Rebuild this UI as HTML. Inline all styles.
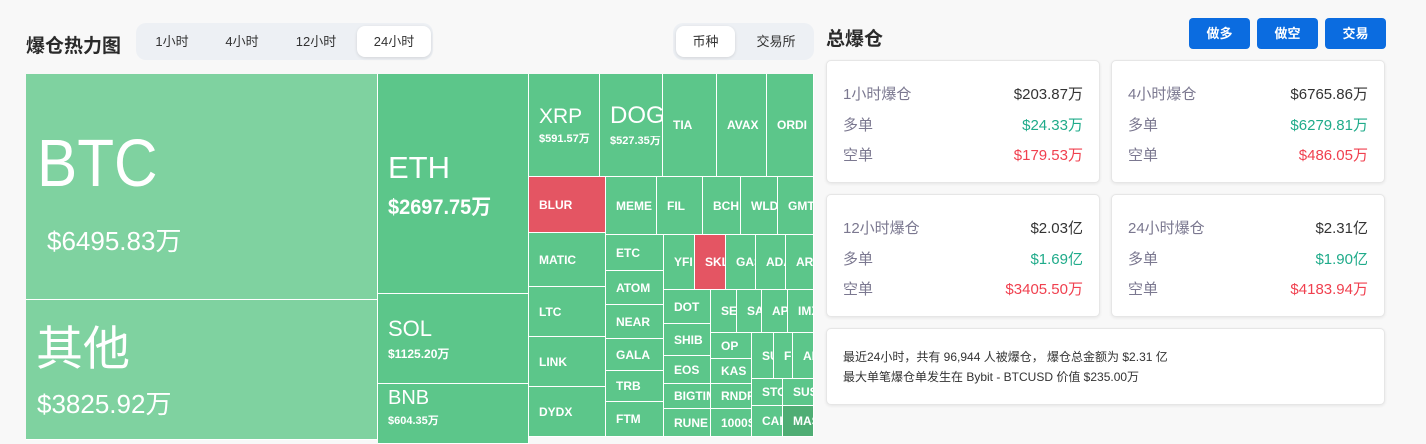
<!DOCTYPE html>
<html><head><meta charset="utf-8"><style>
*{margin:0;padding:0;box-sizing:border-box}
body{width:1426px;height:435px;background:#f8f8f8;font-family:"Liberation Sans","Noto Sans CJK SC",sans-serif;position:relative;overflow:hidden;color:#222}
.a{position:absolute}
.t{position:absolute;background:#5cc68a;border-right:1px solid #fff;border-bottom:1px solid #fff;overflow:hidden;color:#fff;font-weight:bold;font-size:12px;display:flex;align-items:center;padding-left:10px;white-space:nowrap}
.r{background:#e45563}
.l{position:absolute;white-space:nowrap;line-height:1;color:#fff}
.tabs{position:absolute;background:#edf0f4;border-radius:10px}
.tab{position:absolute;font-size:13px;color:#333;line-height:31px;text-align:center}
.on{background:#fff;border-radius:8px;box-shadow:0 1px 3px rgba(0,0,0,.12)}
.btn{position:absolute;top:18px;width:61px;height:31px;background:#0b6ce0;border-radius:4px;color:#fff;font-weight:bold;font-size:13px;text-align:center;line-height:31px}
.card{position:absolute;background:#fff;border:1px solid #e6e6e6;border-radius:5px;box-shadow:0 1px 3px rgba(0,0,0,.08)}
.row{position:absolute;left:16px;right:16px;font-size:15px;display:flex;justify-content:space-between;color:#7b7890}
.g{color:#1fab8a}.rd{color:#f0404f}.k{color:#333}
</style></head><body>
<div class="a" style="left:26px;top:31px;font-size:19px;font-weight:bold;color:#2a2a2a">爆仓热力图</div>
<div class="tabs" style="left:136px;top:23px;width:297px;height:37px">
<div class="tab" style="left:6px;top:3px;width:60px">1小时</div>
<div class="tab" style="left:76px;top:3px;width:60px">4小时</div>
<div class="tab" style="left:148px;top:3px;width:64px">12小时</div>
<div class="tab on" style="left:221px;top:3px;width:74px">24小时</div>
</div>
<div class="tabs" style="left:673px;top:23px;width:141px;height:37px">
<div class="tab on" style="left:3px;top:3px;width:59px">币种</div>
<div class="tab" style="left:70px;top:3px;width:66px">交易所</div>
</div>

<div class="t" style="left:26px;top:74px;width:352px;height:226px;background:#7fd2a0"></div>
<div class="l" style="left:37px;top:130px;font-size:67px;transform:scaleX(.9);transform-origin:left">BTC</div>
<div class="l" style="left:47px;top:228px;font-size:26px">$6495.83万</div>
<div class="t" style="left:26px;top:300px;width:352px;height:140px;background:#7fd2a0"></div>
<div class="l" style="left:36px;top:325px;font-size:47px">其他</div>
<div class="l" style="left:37px;top:391px;font-size:26px">$3825.92万</div>

<div class="t" style="left:378px;top:74px;width:151px;height:220px"></div>
<div class="l" style="left:388px;top:152px;font-size:31px">ETH</div>
<div class="l" style="left:388px;top:197px;font-size:21px;font-weight:bold;transform:scaleX(.95);transform-origin:left">$2697.75万</div>
<div class="t" style="left:378px;top:294px;width:151px;height:90px"></div>
<div class="l" style="left:388px;top:318px;font-size:22px">SOL</div>
<div class="l" style="left:388px;top:348px;font-size:12px;font-weight:bold">$1125.20万</div>
<div class="t" style="left:378px;top:384px;width:151px;height:60px"></div>
<div class="l" style="left:388px;top:388px;font-size:20px">BNB</div>
<div class="l" style="left:388px;top:416px;font-size:11px;font-weight:bold">$604.35万</div>

<div class="t" style="left:529px;top:74px;width:71px;height:103px"></div>
<div class="l" style="left:539px;top:106px;font-size:21px">XRP</div>
<div class="l" style="left:539px;top:134px;font-size:11px;font-weight:bold">$591.57万</div>
<div class="t" style="left:600px;top:74px;width:63px;height:103px"></div>
<div class="l" style="left:610px;top:104px;font-size:24px;width:52px;overflow:hidden">DOGE</div>
<div class="l" style="left:610px;top:136px;font-size:11px;font-weight:bold;width:52px;overflow:hidden">$527.35万</div>
<div class="t" style="left:663px;top:74px;width:54px;height:103px">TIA</div>
<div class="t" style="left:717px;top:74px;width:50px;height:103px">AVAX</div>
<div class="t" style="left:767px;top:74px;width:47px;height:103px">ORDI</div>

<div class="t r" style="left:529px;top:177px;width:77px;height:56px">BLUR</div>
<div class="t" style="left:529px;top:233px;width:77px;height:54px">MATIC</div>
<div class="t" style="left:529px;top:287px;width:77px;height:50px">LTC</div>
<div class="t" style="left:529px;top:337px;width:77px;height:50px">LINK</div>
<div class="t" style="left:529px;top:387px;width:77px;height:50px">DYDX</div>

<div class="t" style="left:606px;top:177px;width:51px;height:58px">MEME</div>
<div class="t" style="left:657px;top:177px;width:46px;height:58px">FIL</div>
<div class="t" style="left:703px;top:177px;width:38px;height:58px">BCH</div>
<div class="t" style="left:741px;top:177px;width:37px;height:58px">WLD</div>
<div class="t" style="left:778px;top:177px;width:36px;height:58px">GMT</div>

<div class="t" style="left:606px;top:235px;width:58px;height:36px">ETC</div>
<div class="t" style="left:606px;top:271px;width:58px;height:34px">ATOM</div>
<div class="t" style="left:606px;top:305px;width:58px;height:34px">NEAR</div>
<div class="t" style="left:606px;top:339px;width:58px;height:32px">GALA</div>
<div class="t" style="left:606px;top:371px;width:58px;height:31px">TRB</div>
<div class="t" style="left:606px;top:402px;width:58px;height:35px">FTM</div>

<div class="t" style="left:664px;top:235px;width:31px;height:55px">YFI</div>
<div class="t r" style="left:695px;top:235px;width:31px;height:55px">SKL</div>
<div class="t" style="left:726px;top:235px;width:30px;height:55px">GAS</div>
<div class="t" style="left:756px;top:235px;width:30px;height:55px">ADA</div>
<div class="t" style="left:786px;top:235px;width:28px;height:55px">ARB</div>

<div class="t" style="left:664px;top:290px;width:47px;height:34px">DOT</div>
<div class="t" style="left:664px;top:324px;width:47px;height:32px">SHIB</div>
<div class="t" style="left:664px;top:356px;width:47px;height:28px">EOS</div>
<div class="t" style="left:664px;top:384px;width:47px;height:25px">BIGTIME</div>
<div class="t" style="left:664px;top:409px;width:47px;height:28px">RUNE</div>

<div class="t" style="left:711px;top:290px;width:26px;height:43px">SEI</div>
<div class="t" style="left:737px;top:290px;width:25px;height:43px">SAND</div>
<div class="t" style="left:762px;top:290px;width:26px;height:43px">APT</div>
<div class="t" style="left:788px;top:290px;width:26px;height:43px">IMX</div>

<div class="t" style="left:711px;top:333px;width:41px;height:26px">OP</div>
<div class="t" style="left:711px;top:359px;width:41px;height:25px">KAS</div>
<div class="t" style="left:711px;top:384px;width:41px;height:25px">RNDR</div>
<div class="t" style="left:711px;top:409px;width:41px;height:28px">1000SATS</div>

<div class="t" style="left:752px;top:333px;width:22px;height:46px">SUI</div>
<div class="t" style="left:774px;top:333px;width:19px;height:46px">FLOW</div>
<div class="t" style="left:793px;top:333px;width:21px;height:46px">AR</div>
<div class="t" style="left:752px;top:379px;width:31px;height:27px">STORJ</div>
<div class="t" style="left:783px;top:379px;width:31px;height:27px">SUSHI</div>
<div class="t" style="left:752px;top:406px;width:31px;height:31px">CAKE</div>
<div class="t" style="left:783px;top:406px;width:31px;height:31px;background:#4fad74">MASK</div>

<div class="a" style="left:826px;top:24px;font-size:19px;font-weight:bold;color:#2a2a2a">总爆仓</div>
<div class="btn" style="left:1189px">做多</div>
<div class="btn" style="left:1257px">做空</div>
<div class="btn" style="left:1325px">交易</div>

<div class="card" style="left:826px;top:60px;width:274px;height:123px">
<div class="row" style="top:22px"><span>1小时爆仓</span><span class="k">$203.87万</span></div>
<div class="row" style="top:53px"><span>多单</span><span class="g">$24.33万</span></div>
<div class="row" style="top:83px"><span>空单</span><span class="rd">$179.53万</span></div>
</div>
<div class="card" style="left:1111px;top:60px;width:274px;height:123px">
<div class="row" style="top:22px"><span>4小时爆仓</span><span class="k">$6765.86万</span></div>
<div class="row" style="top:53px"><span>多单</span><span class="g">$6279.81万</span></div>
<div class="row" style="top:83px"><span>空单</span><span class="rd">$486.05万</span></div>
</div>
<div class="card" style="left:826px;top:194px;width:274px;height:123px">
<div class="row" style="top:22px"><span>12小时爆仓</span><span class="k">$2.03亿</span></div>
<div class="row" style="top:53px"><span>多单</span><span class="g">$1.69亿</span></div>
<div class="row" style="top:83px"><span>空单</span><span class="rd">$3405.50万</span></div>
</div>
<div class="card" style="left:1111px;top:194px;width:274px;height:123px">
<div class="row" style="top:22px"><span>24小时爆仓</span><span class="k">$2.31亿</span></div>
<div class="row" style="top:53px"><span>多单</span><span class="g">$1.90亿</span></div>
<div class="row" style="top:83px"><span>空单</span><span class="rd">$4183.94万</span></div>
</div>
<div class="card" style="left:826px;top:328px;width:559px;height:77px">
<div class="a" style="left:16px;top:18px;font-size:12px;line-height:20px;color:#333">最近24小时，共有 96,944 人被爆仓， 爆仓总金额为 $2.31 亿<br>最大单笔爆仓单发生在 Bybit - BTCUSD 价值 $235.00万</div>
</div>
</body></html>
